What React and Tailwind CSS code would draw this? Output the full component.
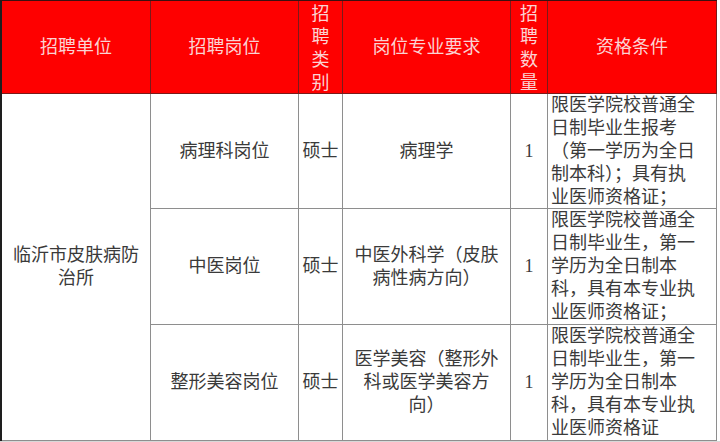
import React from 'react';

const font = { fontFamily: '"Liberation Serif", "Noto Sans CJK SC", serif' };

const rows = [
  {
    post: ['病理科岗位'],
    major: ['病理学'],
    req: ['限医学院校普通全', '日制毕业生报考', '（第一学历为全日', '制本科）；具有执', '业医师资格证；'],
  },
  {
    post: ['中医岗位'],
    major: ['中医外科学（皮肤', '病性病方向）'],
    req: ['限医学院校普通全', '日制毕业生，第一', '学历为全日制本', '科，具有本专业执', '业医师资格证；'],
  },
  {
    post: ['整形美容岗位'],
    major: ['医学美容（整形外', '科或医学美容方', '向）'],
    req: ['限医学院校普通全', '日制毕业生，第一', '学历为全日制本', '科，具有本专业执', '业医师资格证'],
  },
];

const Lines = ({ lines }) => lines.map((l, i) => <div key={i}>{l}</div>);

const App = () => {
  const head = 'flex items-center justify-center text-center bg-[#fe0000] text-[#fbd3d3] border-r border-b border-[#7a1a1a]';
  const stack = 'flex flex-col items-center justify-start pt-[2px] bg-[#fe0000] text-[#fbd3d3] border-r border-b border-[#7a1a1a]';
  const cell = 'flex items-center justify-center text-center border-r border-b border-[#8e8e8e]';

  return (
    <div className="w-[720px] h-[442px] bg-white overflow-hidden" style={font}>
      <div className="grid grid-cols-[149px_148px_44px_168px_37px_169px] grid-rows-[93px_115px_116px_116px] w-[717px] border-l-2 border-t border-l-[#1e1e1e] border-t-[#3a1010] text-[18px] leading-[23px] text-[#3a3a3a]">
        {/* Header */}
        <div className={head}>招聘单位</div>
        <div className={head}>招聘岗位</div>
        <div className={stack}>
          <Lines lines={['招', '聘', '类', '别']} />
        </div>
        <div className={head}>岗位专业要求</div>
        <div className={stack}>
          <Lines lines={['招', '聘', '数', '量']} />
        </div>
        <div className={head}>资格条件</div>

        {/* Unit cell spans all rows */}
        <div className={`${cell} row-span-3 flex-col`}>
          <Lines lines={['临沂市皮肤病防', '治所']} />
        </div>

        {rows.map((r, i) => (
          <React.Fragment key={i}>
            <div className={`${cell} flex-col`}>
              <Lines lines={r.post} />
            </div>
            <div className={cell}>硕士</div>
            <div className={`${cell} flex-col`}>
              <Lines lines={r.major} />
            </div>
            <div className={cell}>1</div>
            <div className={`${cell} flex-col items-start justify-center text-left pl-[3px]`}>
              <Lines lines={r.req} />
            </div>
          </React.Fragment>
        ))}
      </div>
      <div className="h-px bg-[#d8d8d8]" />
    </div>
  );
};

export default App;
